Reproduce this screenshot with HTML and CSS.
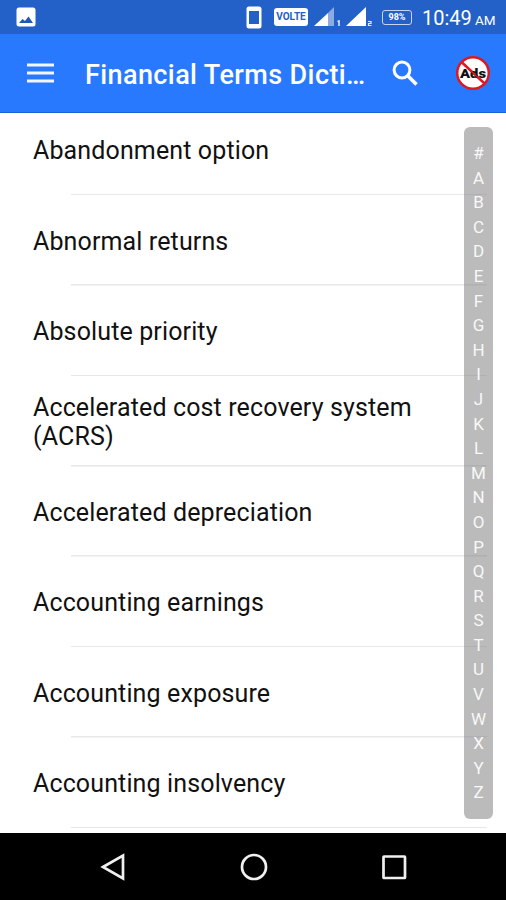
FILE: index.html
```html
<!DOCTYPE html>
<html lang="en">
<head>
    <meta charset="UTF-8">
    <meta name="viewport" content="width=device-width, initial-scale=1.0">
    <title>Financial Terms Dictionary</title>
    <link rel="stylesheet" href="styles.css">
</head>
<body>
    <!-- Status bar -->
    <div class="status-bar">
        <svg class="picture-icon" width="20" height="20" viewBox="0 0 20 20">
            <rect x="0.5" y="0.5" width="19" height="19" rx="2.5" fill="#fff"/>
            <path d="M3 16l3.500-4 2.500 2 3.500-4.500 4.500 6.500z" fill="#1f58b8"/>
        </svg>
        <div class="status-right">
            <svg class="phone-icon" width="16" height="23" viewBox="0 0 16 23">
                <rect x="0.500" y="0.500" width="15" height="22" rx="2.500" fill="#fff"/>
                <rect x="3" y="5" width="10" height="13" fill="#2360c8"/>
            </svg>
            <span class="volte">VOLTE</span>
            <svg class="signal-one" width="27" height="20" viewBox="0 0 27 20">
                <path d="M0 19L14 6v13z" fill="#fff"/>
                <path d="M14 6l6-6v19h-6z" fill="#8dabe2"/>
                <path d="M23.500 14.500l1.500-.5v5" fill="none" stroke="#e4ecfa" stroke-width="1.500"/>
            </svg>
            <svg class="signal-two" width="28" height="20" viewBox="0 0 28 20">
                <path d="M0 19L20 0v19z" fill="#fff"/>
                <path d="M22 14.500h3v2h-2.500v2h3" fill="none" stroke="#e4ecfa" stroke-width="1.200"/>
            </svg>
            <span class="battery">98%</span>
            <span class="clock">10:49</span>
            <span class="ampm">AM</span>
        </div>
    </div>

    <!-- Toolbar -->
    <header class="toolbar">
        <svg class="menu-icon" width="27" height="20" viewBox="0 0 27 20">
            <path d="M0 2h27M0 10h27M0 18h27" stroke="#f2f7ff" stroke-width="3"/>
        </svg>
        <h1>Financial Terms Dicti…</h1>
        <svg class="search-icon" width="27" height="27" viewBox="0 0 27 27">
            <circle cx="10" cy="10" r="7.900" fill="none" stroke="#fff" stroke-width="3"/>
            <path d="M15.500 15.500l9 9" stroke="#fff" stroke-width="3.500"/>
        </svg>
        <svg class="ads-icon" width="36" height="36" viewBox="0 0 36 36">
            <circle cx="18" cy="18" r="15.800" fill="#fff" stroke="#de1820" stroke-width="2.500"/>
            <path d="M7 7.500l22 20.500" stroke="#de1820" stroke-width="2.500"/>
            <text x="18" y="22.500" textLength="26" lengthAdjust="spacingAndGlyphs" text-anchor="middle">Ads</text>
            <path d="M15 15l9 8.500" stroke="#de1820" stroke-width="1.500"/>
        </svg>
    </header>

    <!-- Terms -->
    <main class="content">
        <ul class="terms">
            <li>Abandonment option</li>
            <li>Abnormal returns</li>
            <li>Absolute priority</li>
            <li>Accelerated cost recovery system (ACRS)</li>
            <li>Accelerated depreciation</li>
            <li>Accounting earnings</li>
            <li>Accounting exposure</li>
            <li>Accounting insolvency</li>
        </ul>
        <div class="index-bar">
            <span>#</span>
            <span>A</span>
            <span>B</span>
            <span>C</span>
            <span>D</span>
            <span>E</span>
            <span>F</span>
            <span>G</span>
            <span>H</span>
            <span>I</span>
            <span>J</span>
            <span>K</span>
            <span>L</span>
            <span>M</span>
            <span>N</span>
            <span>O</span>
            <span>P</span>
            <span>Q</span>
            <span>R</span>
            <span>S</span>
            <span>T</span>
            <span>U</span>
            <span>V</span>
            <span>W</span>
            <span>X</span>
            <span>Y</span>
            <span>Z</span>
        </div>
    </main>

    <!-- Navigation buttons -->
    <nav class="nav-bar">
        <svg width="28" height="28" viewBox="0 0 28 28">
            <path d="M4 14L24 2.500v23z"/>
        </svg>
        <svg width="28" height="28" viewBox="0 0 28 28">
            <circle cx="14" cy="14" r="12"/>
        </svg>
        <svg width="28" height="28" viewBox="0 0 28 28">
            <rect x="3.500" y="3.500" width="21.500" height="21.500" rx="0.500"/>
        </svg>
    </nav>
</body>
</html>
```
FILE: styles.css
```css
* {
    box-sizing: border-box;
    margin: 0;
    padding: 0;
}

body {
    font-family: Roboto, "Liberation Sans", sans-serif;
    background-color: #fff;
    color: #111;
    display: flex;
    flex-direction: column;
    height: 100vh;
    overflow: hidden;
}

svg {
    display: block;
    flex: none;
}

.status-bar {
    display: flex;
    justify-content: space-between;
    align-items: center;
    height: 34px;
    padding: 0 11px 0 16px;
    background-color: #2360c8;
    color: #fff;
    flex: none;
}

.status-right {
    display: flex;
    align-items: center;
}

.phone-icon {
    margin-right: 12px;
}

.volte {
    width: 34px;
    height: 18px;
    margin-right: 6px;
    border-radius: 3px;
    background-color: #fff;
    color: #2360c8;
    font-size: 10px;
    font-weight: 700;
    line-height: 18px;
    text-align: center;
}

.signal-one {
    margin-right: 5px;
}

.signal-two {
    margin-right: 8px;
}

.battery {
    width: 30px;
    height: 15px;
    margin-right: 10px;
    border: 1.5px solid #c4d4f2;
    border-radius: 3px;
    font-size: 9px;
    font-weight: 700;
    line-height: 13px;
    text-align: center;
}

.clock {
    width: 49px;
    margin-right: 4px;
    padding-top: 2px;
    font-size: 20px;
}

.ampm {
    width: 20px;
    padding-top: 6px;
    font-size: 13.5px;
}

.toolbar {
    display: flex;
    align-items: center;
    height: 79px;
    padding: 0 15px 0 27px;
    background-color: #2979ff;
    border-bottom: 1px solid #1c61d6;
    flex: none;
}

h1 {
    width: 290px;
    margin-left: 31px;
    padding-top: 3px;
    color: #fff;
    font-size: 27px;
    font-weight: 500;
    letter-spacing: 0.4px;
    white-space: nowrap;
}

.search-icon {
    margin-left: 17px;
}

.ads-icon {
    margin-left: auto;
}

.ads-icon text {
    font-size: 13px;
    font-weight: 900;
    fill: #111;
}

.content {
    position: relative;
    height: 720px;
    overflow: hidden;
    flex: none;
}

/* list is scrolled a little under the toolbar */
.terms {
    margin-top: -8px;
    list-style: none;
}

.terms li {
    display: flex;
    flex-direction: column;
    justify-content: center;
    height: 90.4px;
    padding: 2px 80px 0 33px;
    font-size: 25px;
    letter-spacing: 0.13px;
    line-height: 29.5px;
    background: linear-gradient(#e8e8e8, #e8e8e8) 71px 100% / 416px 1.5px no-repeat;
}

.index-bar {
    position: absolute;
    top: 14px;
    right: 13px;
    display: flex;
    flex-direction: column;
    width: 29px;
    height: 692px;
    padding: 14px 0;
    border-radius: 6px;
    background-color: rgba(120, 120, 120, 0.5);
    color: #f8f8f8;
    font-size: 17px;
    text-align: center;
}

.index-bar span {
    flex: 1;
    line-height: 24.6px;
}

.nav-bar {
    display: flex;
    justify-content: space-between;
    align-items: center;
    height: 67px;
    padding: 0 98px 0 99px;
    background-color: #000;
    flex: none;
}

.nav-bar svg {
    fill: none;
    stroke: #f0f0f0;
    stroke-width: 2.7;
}
```
